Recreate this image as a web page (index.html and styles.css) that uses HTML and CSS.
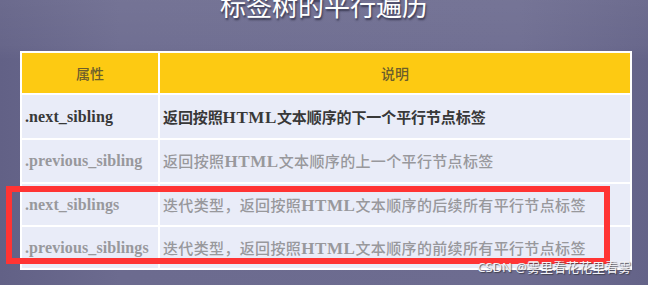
FILE: index.html
```html
<!DOCTYPE html>
<html lang="zh">
<head>
<meta charset="utf-8">
<title>标签树的平行遍历</title>
<link rel="stylesheet" href="styles.css">
</head>
<body>
<div class="slide">
  <h1 class="title">标签树的平行遍历</h1>
  <table class="attr-table">
    <thead>
      <tr>
        <th class="col-name">属性</th>
        <th class="col-desc">说明</th>
      </tr>
    </thead>
    <tbody>
      <tr class="row row-1 active">
        <td class="name">.next_sibling</td>
        <td class="desc">返回按照<span class="latin">HTML</span>文本顺序的下一个平行节点标签</td>
      </tr>
      <tr class="row row-2">
        <td class="name">.previous_sibling</td>
        <td class="desc">返回按照<span class="latin">HTML</span>文本顺序的上一个平行节点标签</td>
      </tr>
      <tr class="row row-3">
        <td class="name">.next_siblings</td>
        <td class="desc">迭代类型，返回按照<span class="latin">HTML</span>文本顺序的后续所有平行节点标签</td>
      </tr>
      <tr class="row row-4">
        <td class="name">.previous_siblings</td>
        <td class="desc">迭代类型，返回按照<span class="latin">HTML</span>文本顺序的前续所有平行节点标签</td>
      </tr>
    </tbody>
  </table>
  <div class="highlight"></div>
  <div class="watermark">CSDN @雾里看花花里看雾</div>
</div>
</body>
</html>
```

FILE: styles.css
```css
html, body {
  margin: 0;
  padding: 0;
}
body {
  width: 648px;
  height: 285px;
  overflow: hidden;
  background: #69688c;
}
.slide {
  position: relative;
  width: 648px;
  height: 285px;
  overflow: hidden;
  background:
    linear-gradient(180deg, rgba(255,255,255,0.06) 0px, rgba(255,255,255,0.03) 45px, rgba(0,0,0,0) 60px),
    linear-gradient(90deg, #626186 0px, #6c6b8f 120px, #6d6c90 520px, #646388 648px);
  font-family: "Noto Sans CJK SC", "Noto Sans", sans-serif;
}
.title {
  margin: -8px 0 0 0;
  height: 26px;
  line-height: 26px;
  font-size: 26px;
  font-weight: 400;
  color: #ffffff;
  text-align: center;
  text-shadow: 1px 2px 2px rgba(30, 30, 50, 0.7);
}
.attr-table {
  margin: 33px 0 0 20px;
  width: 612px;
  border-collapse: separate;
  border-spacing: 2px;
  background: #ffffff;
  table-layout: fixed;
}
.attr-table th,
.attr-table td {
  padding: 0 3px;
  vertical-align: middle;
}
.attr-table th {
  height: 40px;
  background: #fdca12;
  color: #6c5e2c;
  font-family: "Noto Sans CJK SC", sans-serif;
  font-weight: 500;
  font-size: 14px;
  text-align: center;
}
.col-name {
  width: 130px;
}
.row td {
  background: #e9ecf8;
  color: #98989c;
}
.row-1 td { height: 43px; }
.row-2 td { height: 42px; }
.row-3 td { height: 41px; }
.row-4 td { height: 41px; }
.name {
  font-family: "Liberation Serif", serif;
  font-weight: 700;
  font-size: 16px;
  letter-spacing: 0.1px;
  white-space: nowrap;
}
.desc {
  font-family: "Noto Sans CJK SC", sans-serif;
  font-size: 15px;
  font-weight: 500;
  letter-spacing: 0.35px;
  white-space: nowrap;
}
.latin {
  font-family: "Liberation Serif", serif;
  font-weight: 700;
  font-size: 17px;
  letter-spacing: 0.6px;
}
.row.active td {
  color: #383838;
}
.row.active .desc {
  font-weight: 700;
  letter-spacing: -0.1px;
}
.highlight {
  position: absolute;
  left: 6px;
  top: 186px;
  width: 604px;
  height: 78px;
  box-sizing: border-box;
  border: 6px solid #ff3434;
}
.watermark {
  position: absolute;
  right: 17px;
  top: 258px;
  font-family: "Noto Sans", "Noto Sans CJK SC", sans-serif;
  font-size: 13px;
  line-height: 18px;
  color: #f4f4f8;
  text-shadow: 1px 1px 1px rgba(60, 60, 70, 0.9);
}
```
